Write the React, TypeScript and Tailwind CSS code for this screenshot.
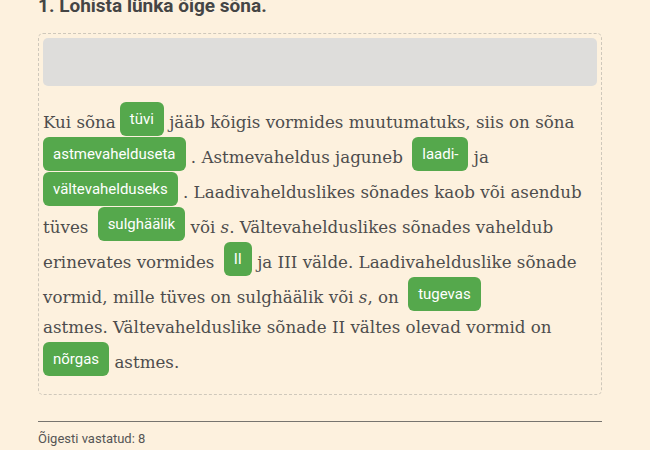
import React from "react";

const Chip = ({ children, first }: { children: React.ReactNode; first?: boolean }) => (
  <span
    className={
      "inline-block align-[4px] rounded-[6px] bg-[#55a84c] px-[10px] py-[7px] font-['Roboto',sans-serif] text-[15px] leading-[20px] text-white " +
      (first ? "ml-0" : "ml-[4px]")
    }
  >
    {children}
  </span>
);

const App: React.FC = () => {
  return (
    <div className="min-h-screen bg-[#fdf1de] px-[38px] pb-10 text-[#4d4d4d]">
      <h2 className="-mt-[6px] mb-[15px] font-['Roboto',sans-serif] text-[19px] font-bold leading-[24px] text-[#454545]">
        1. Lohista lünka õige sõna.
      </h2>

      <div className="w-[564px] rounded-[5px] border border-dashed border-[#cfc8bb] px-[4px] pt-[4px] pb-[4px]">
        <div className="h-[48px] rounded-[5px] bg-[#dedddb]" />
        <p className="mt-[16px] mb-[13px] font-['DejaVu_Serif',serif] text-[16.7px] leading-[30px]">
          Kui sõna<Chip>tüvi</Chip> jääb kõigis vormides muutumatuks, siis on sõna <Chip first>astmevahelduseta</Chip> . Astmevaheldus jaguneb <Chip>laadi-</Chip> ja <Chip first>vältevahelduseks</Chip> . Laadivahelduslikes sõnades kaob või asendub tüves <Chip>sulghäälik</Chip> või <i>s</i>. Vältevahelduslikes sõnades vaheldub erinevates vormides <Chip>II</Chip> ja III välde. Laadivahelduslike sõnade vormid, mille tüves on sulghäälik või <i>s</i>, on <Chip>tugevas</Chip>
          <br />
          astmes. Vältevahelduslike sõnade II vältes olevad vormid on <Chip first>nõrgas</Chip> astmes.
        </p>
      </div>

      <hr className="mt-[26px] w-[564px] border-0 border-t-[1.5px] border-[#77746f]" />
      <div className="mt-[8px] font-['Roboto',sans-serif] text-[13px] leading-[17px] text-[#555]">
        <p>Õigesti vastatud: 8</p>
        <p>Valesti vastatud: 0</p>
      </div>
    </div>
  );
};

export default App;
